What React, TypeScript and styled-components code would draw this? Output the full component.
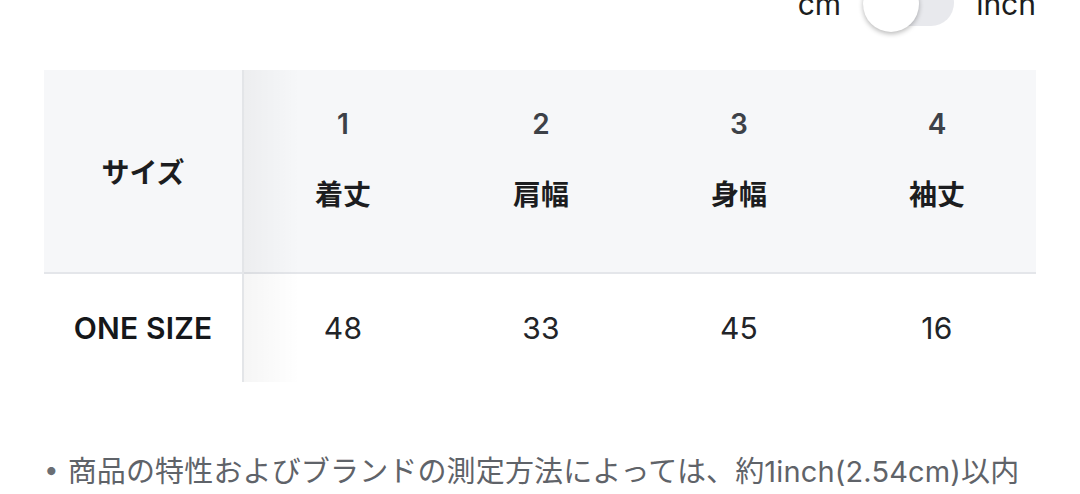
import React from "react";
import styled, { createGlobalStyle } from "styled-components";

const GlobalStyle = createGlobalStyle`
  html, body { margin: 0; padding: 0; background: #ffffff; }
  body {
    font-family: "Inter", "Noto Sans CJK JP", sans-serif;
    color: #1c1d20;
    overflow: hidden;
  }
`;

const Page = styled.div`
  width: 1080px;
  height: 494px;
  padding: 0 44px;
  box-sizing: border-box;
  display: flex;
  flex-direction: column;
`;

const UnitRow = styled.div`
  display: flex;
  justify-content: flex-end;
  align-items: center;
  gap: 22px;
  height: 56px;
  margin-top: -25px;
`;

const UnitLabel = styled.span`
  font-size: 30px;
  color: #1c1d20;
  line-height: 1;
  margin-top: 2px;
`;

const Track = styled.div`
  position: relative;
  width: 91px;
  height: 46px;
  border-radius: 23px;
  background: #e8e9ed;
`;

const Knob = styled.div`
  position: absolute;
  left: 0;
  top: -4px;
  width: 56px;
  height: 56px;
  border-radius: 50%;
  background: #ffffff;
  box-shadow: 0 2px 5px rgba(0, 0, 0, 0.28);
`;

const Table = styled.div`
  margin-top: 39px;
  display: grid;
  grid-template-columns: 198px 2px 1fr;
  width: 992px;
`;

const Divider = styled.div`
  background: #e3e5e8;
`;

const StickyCol = styled.div`
  display: grid;
  grid-template-rows: 202px 2px 108px;
`;

const ScrollArea = styled.div`
  position: relative;
  display: grid;
  grid-template-columns: repeat(4, 1fr);
  grid-template-rows: 202px 2px 108px;
`;

const Shade = styled.div`
  position: absolute;
  left: 0;
  top: 0;
  bottom: 0;
  width: 56px;
  background: linear-gradient(to right, rgba(0, 0, 0, 0.04), rgba(0, 0, 0, 0));
  pointer-events: none;
`;

const HeadCell = styled.div<{ $center?: boolean }>`
  background: #f6f7f9;
  display: flex;
  flex-direction: column;
  align-items: center;
  justify-content: ${(p) => (p.$center ? "center" : "flex-start")};
  padding-top: ${(p) => (p.$center ? "0" : "36px")};
  box-sizing: border-box;
  gap: 35px;
`;

const HeadRule = styled.div<{ $span?: number }>`
  background: #e4e6ea;
  grid-column: ${(p) => (p.$span ? `1 / span ${p.$span}` : "auto")};
`;

const ColNumber = styled.span`
  font-size: 28px;
  line-height: 36px;
  font-weight: 600;
  color: #3d4148;
`;

const ColLabel = styled.span`
  font-size: 28px;
  line-height: 36px;
  font-weight: 700;
  color: #1c1d20;
`;

const SizeHead = styled.span`
  font-size: 28px;
  font-weight: 700;
  color: #1c1d20;
`;

const BodyCell = styled.div<{ $strong?: boolean }>`
  display: flex;
  align-items: center;
  justify-content: center;
  font-size: 30px;
  letter-spacing: ${(p) => (p.$strong ? "0.2px" : "0.3px")};
  font-weight: ${(p) => (p.$strong ? 600 : 400)};
  color: ${(p) => (p.$strong ? "#15171a" : "#222428")};
`;

const Note = styled.div`
  margin-top: 66px;
  display: flex;
  align-items: center;
  gap: 9px;
  font-size: 29px;
  color: #5f6369;
  white-space: nowrap;
`;

const Bullet = styled.span`
  font-size: 26px;
  color: #6a6e74;
`;

const NoteText = styled.span`
  letter-spacing: 0.15px;
`;

const columns = [
  { no: "1", label: "着丈", value: "48" },
  { no: "2", label: "肩幅", value: "33" },
  { no: "3", label: "身幅", value: "45" },
  { no: "4", label: "袖丈", value: "16" },
];

export default function App() {
  return (
    <>
      <GlobalStyle />
      <Page>
        <UnitRow>
          <UnitLabel>cm</UnitLabel>
          <Track>
            <Knob />
          </Track>
          <UnitLabel>inch</UnitLabel>
        </UnitRow>
        <Table>
          <StickyCol>
            <HeadCell $center>
              <SizeHead>サイズ</SizeHead>
            </HeadCell>
            <HeadRule />
            <BodyCell $strong>ONE SIZE</BodyCell>
          </StickyCol>
          <Divider />
          <ScrollArea>
            {columns.map((c) => (
              <HeadCell key={c.no}>
                <ColNumber>{c.no}</ColNumber>
                <ColLabel>{c.label}</ColLabel>
              </HeadCell>
            ))}
            <HeadRule $span={4} />
            {columns.map((c) => (
              <BodyCell key={c.no}>{c.value}</BodyCell>
            ))}
            <Shade />
          </ScrollArea>
        </Table>
        <Note>
          <Bullet>•</Bullet>
          <NoteText>商品の特性およびブランドの測定方法によっては、約1inch(2.54cm)以内</NoteText>
        </Note>
      </Page>
    </>
  );
}
